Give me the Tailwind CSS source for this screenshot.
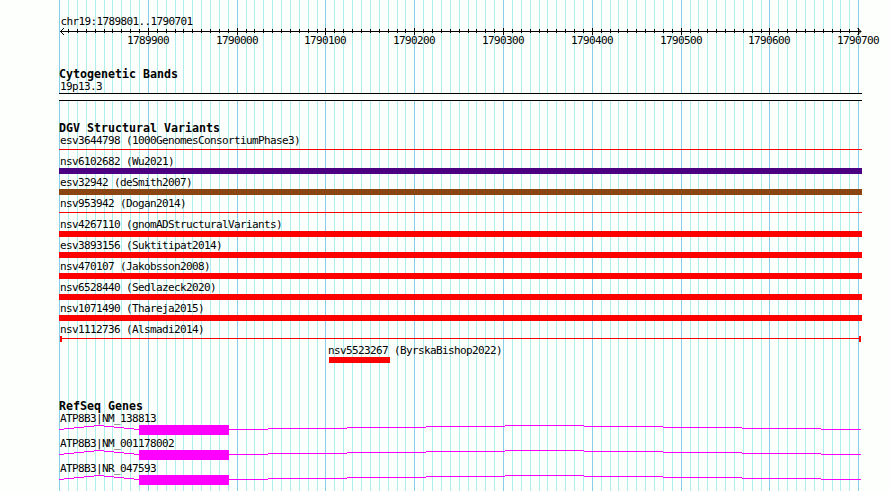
<!DOCTYPE html>
<html lang="en">
<head>
  <meta charset="UTF-8">
  <meta name="viewport" content="width=device-width, initial-scale=1.0">
  <title>chr19:1789801..1790701</title>
  <script src="https://cdn.jsdelivr.net/npm/@tailwindcss/browser@4"></script>
</head>
<body class="bg-[#fdfffc]">
  <div class="relative w-[890px] h-[491px] overflow-hidden text-black whitespace-nowrap font-['DejaVu_Sans_Mono',monospace] text-[11px] leading-[13px] tracking-[-0.62px]">

    <!-- Grid lines -->
    <svg class="absolute inset-0" width="890" height="491" fill="none" shape-rendering="crispEdges">
      <path id="grid-minor" stroke="#afeeee" />
      <path id="grid-major" stroke="#87ceeb" />
    </svg>

    <main class="relative flex flex-col">
      <!-- Ruler -->
      <section class="h-[67px]">
        <svg class="block" width="890" height="67" fill="none" stroke="black">
          <text x="60.5" y="25" fill="black" stroke="none">chr19:1789801..1790701</text>
          <path id="ticks" shape-rendering="crispEdges" />
          <path d="M64 28L60.5 31.5L64 35M857.5 28L861 31.5L857.5 35" />
          <g id="tick-labels" fill="black" stroke="none"></g>
        </svg>
      </section>

      <!-- Cytogenetic Bands -->
      <section class="h-[54px] pl-[59px]">
        <h2 class="h-[13px] font-bold text-[11.63px] leading-[14px] tracking-normal">Cytogenetic Bands</h2>
        <p class="pl-px">19p13.3</p>
        <div class="w-[803px] h-[8px] border-y border-black bg-[#fdfffc]"></div>
      </section>

      <!-- DGV Structural Variants -->
      <section class="h-[278px] pl-[59px]">
        <h2 class="h-[13px] font-bold text-[11.63px] leading-[14px] tracking-normal">DGV Structural Variants</h2>
        <div class="h-[21px]">
          <p class="pl-px">esv3644798 (1000GenomesConsortiumPhase3)</p>
          <div class="mt-[2px] w-[803px] h-px bg-[#ff0000]"></div>
        </div>
        <div class="h-[21px]">
          <p class="pl-px">nsv6102682 (Wu2021)</p>
          <div class="w-[803px] h-[6px] bg-[#4b0082]"></div>
        </div>
        <div class="h-[21px]">
          <p class="pl-px">esv32942 (deSmith2007)</p>
          <div class="w-[803px] h-[6px] bg-[#8b4513]"></div>
        </div>
        <div class="h-[21px]">
          <p class="pl-px">nsv953942 (Dogan2014)</p>
          <div class="mt-[2px] w-[803px] h-px bg-[#ff0000]"></div>
        </div>
        <div class="h-[21px]">
          <p class="pl-px">nsv4267110 (gnomADStructuralVariants)</p>
          <div class="w-[803px] h-[6px] bg-[#ff0000]"></div>
        </div>
        <div class="h-[21px]">
          <p class="pl-px">esv3893156 (Suktitipat2014)</p>
          <div class="w-[803px] h-[6px] bg-[#ff0000]"></div>
        </div>
        <div class="h-[21px]">
          <p class="pl-px">nsv470107 (Jakobsson2008)</p>
          <div class="w-[803px] h-[6px] bg-[#ff0000]"></div>
        </div>
        <div class="h-[21px]">
          <p class="pl-px">nsv6528440 (Sedlazeck2020)</p>
          <div class="w-[803px] h-[6px] bg-[#ff0000]"></div>
        </div>
        <div class="h-[21px]">
          <p class="pl-px">nsv1071490 (Thareja2015)</p>
          <div class="w-[803px] h-[6px] bg-[#ff0000]"></div>
        </div>
        <div class="h-[21px]">
          <p class="pl-px">nsv1112736 (Alsmadi2014)</p>
          <div class="ml-px flex w-[801px] h-[6px]">
            <div class="w-[2px] bg-[#ff0000]"></div>
            <div class="mt-[2px] h-px grow bg-[#ff0000]"></div>
            <div class="w-[2px] bg-[#ff0000]"></div>
          </div>
        </div>
        <div class="h-[21px] pl-[269px]">
          <p>nsv5523267 (ByrskaBishop2022)</p>
          <div class="ml-px w-[61px] h-[6px] bg-[#ff0000]"></div>
        </div>
      </section>

      <!-- RefSeq Genes -->
      <section class="pl-[59px]">
        <h2 class="h-[13px] font-bold text-[11.63px] leading-[14px] tracking-normal">RefSeq Genes</h2>
        <div class="h-[25px]">
          <p class="pl-px">ATP8B3|NM_138813</p>
          <svg class="transcript block" width="803" height="10" fill="none" shape-rendering="crispEdges"></svg>
        </div>
        <div class="h-[25px]">
          <p class="pl-px">ATP8B3|NM_001178002</p>
          <svg class="transcript block" width="803" height="10" fill="none" shape-rendering="crispEdges"></svg>
        </div>
        <div class="h-[25px]">
          <p class="pl-px">ATP8B3|NR_047593</p>
          <svg class="transcript block" width="803" height="10" fill="none" shape-rendering="crispEdges"></svg>
        </div>
      </section>
    </main>
  </div>

  <script>
    // 901 bp drawn over 800px, base 1789801 sits at x = 60.
    // One grid line every 10 bp, a major one every 100 bp
    const scale = 800 / 901;
    let minor = '';
    let major = '';
    let ticks = 'M60 31.5H861';
    let labels = '';
    for (let i = 0; i <= 90; i++) {
      const x = Math.round(60 + (i * 10 - 1) * scale);
      if (i % 10 === 0) {
        major += `M${x + 0.5} 0V491`;
        if (i > 0) {
          ticks += `M${x + 0.5} 28V35`;
          labels += `<text x="${x - 21}" y="44">${1789800 + i * 10}</text>`;
        }
      } else {
        minor += `M${x + 0.5} 0V491`;
        ticks += `M${x + 0.5} 29V33`;
      }
    }
    document.getElementById('grid-minor').setAttribute('d', minor);
    document.getElementById('grid-major').setAttribute('d', major);
    document.getElementById('ticks').setAttribute('d', ticks);
    document.getElementById('tick-labels').innerHTML = labels;

    // Introns are stepped lines either side of the exon
    document.querySelectorAll('.transcript').forEach((svg) => {
      svg.innerHTML = `
        <path stroke="#ff00ff" d="M0 4.5H5M5 3.5H15M15 2.5H25M25 1.5H35M35 .5H45M45 1.5H55M55 2.5H65M65 3.5H75M75 4.5H80" />
        <rect x="80" y="0" width="90" height="10" fill="#ff00ff" />
        <path stroke="#ff00ff" d="M170 4.5H209M209 3.5H288M288 2.5H367M367 1.5H446M446 .5H525M525 1.5H604M604 2.5H683M683 3.5H762M762 4.5H802" />`;
    });
  </script>
</body>
</html>
